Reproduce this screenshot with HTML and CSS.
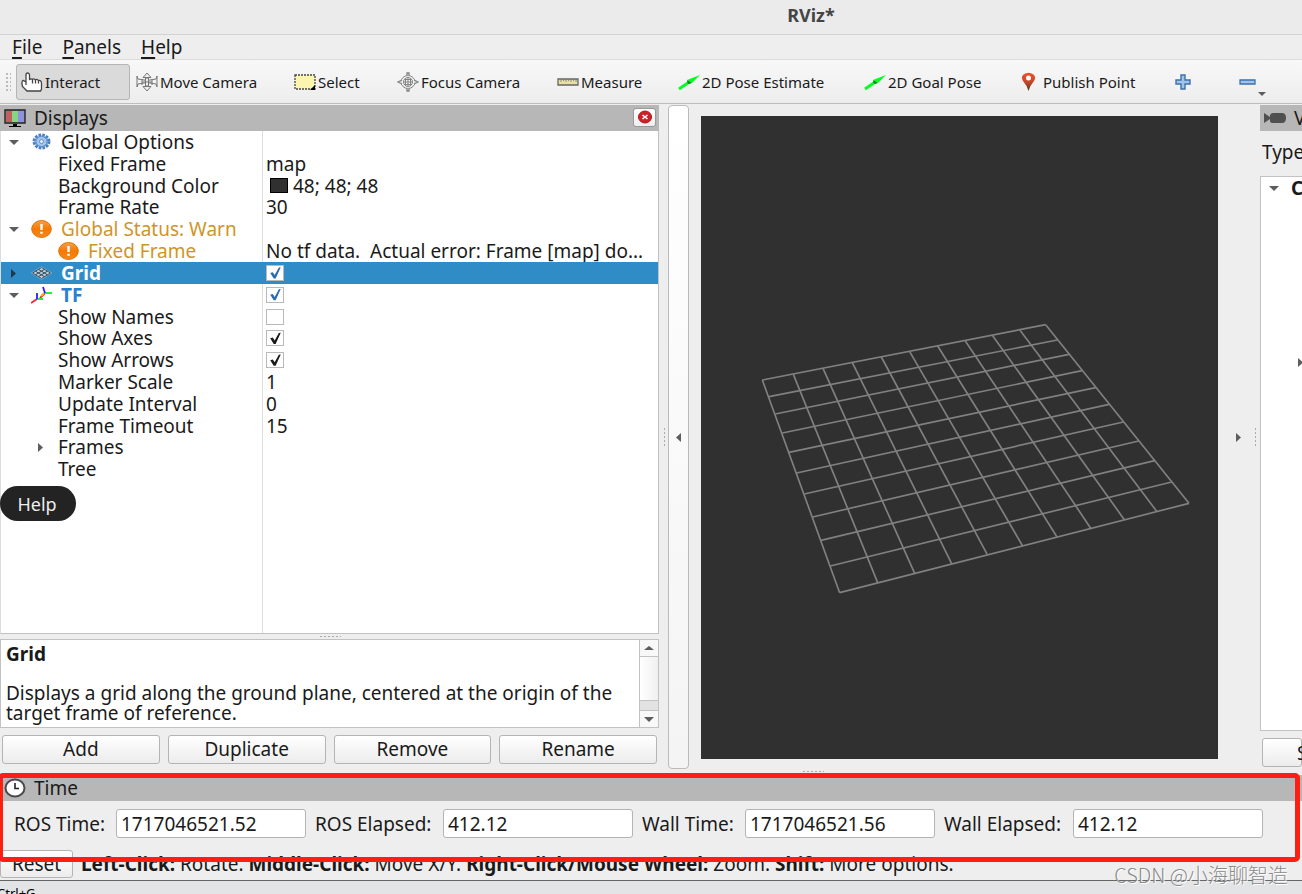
FILE: index.html
```html
<!DOCTYPE html>
<html lang="en">
<head>
<meta charset="utf-8">
<title>RViz*</title>
<link rel="stylesheet" href="styles.css">
</head>
<body>
<svg class="defs" aria-hidden="true">
  <defs>
    <linearGradient id="orange" x1="0" y1="0" x2="0" y2="1"><stop offset="0" stop-color="#f9a04a"/><stop offset=".5" stop-color="#f57900"/><stop offset="1" stop-color="#f58a1c"/></linearGradient>
    <linearGradient id="pin" x1="0" y1="0" x2="0" y2="1"><stop offset="0" stop-color="#f0502c"/><stop offset=".5" stop-color="#c8482a"/><stop offset="1" stop-color="#4e3a1c"/></linearGradient>
    <symbol id="down" viewBox="0 0 12 12"><path d="M1 4h10L6 9z" fill="#5d5d5d"/></symbol>
    <symbol id="right" viewBox="0 0 12 12"><path d="M3 2v9l5-4.500z" fill="currentColor"/></symbol>
    <symbol id="left" viewBox="0 0 12 12"><path d="M8 2v9L3 6.500z" fill="#5d5d5d"/></symbol>
    <symbol id="warn" viewBox="0 0 21 18"><ellipse cx="10.500" cy="9" rx="9.800" ry="8.500" fill="url(#orange)" stroke="#e0700c"/><path d="M10.500 4v6M10.500 11.800v2" stroke="#fff" stroke-width="2.400"/></symbol>
    <symbol id="arrow3d" viewBox="0 0 22 18"><path d="M1 16L12 8.500" stroke="#0f2" stroke-width="3"/><path d="M9 7L22 2l-8 8z" fill="#0f2"/><path d="M9 7l5 3-3 1-1.500-1z" fill="#0a8a1c"/></symbol>
  </defs>
</svg>
<header class="titlebar"><h1>RViz*</h1></header>
<nav class="menubar">
  <button><u>F</u>ile</button><button><u>P</u>anels</button><button><u>H</u>elp</button>
</nav>
<div class="toolbar">
  <span class="grip"></span>
  <button class="tool active"><svg width="22" height="20" viewBox="0 0 22 20"><path d="M5 10V3q0-2 1.700-2T8.500 3v5q1-2 3-.5 1-1.500 3 .5 1-1.500 3 .5 3-.5 3 3v5.500L19.500 19H6l-4.500-4.500Q0 8.500 2.500 8.500L5 10v3M11.500 8v3.500M14.500 8v3.500M17.500 9v2.500" fill="#fff" stroke="#444" stroke-width="1.300"/></svg>Interact</button>
  <button class="tool"><svg width="22" height="20" viewBox="0 0 22 20"><g fill="#eee" stroke="#777"><path d="M11 1l4 4.500H7zM11 19l4-4.500H7z"/><path d="M1 4l1 3q9 3 18 0l1-3v11l-1-3q-9-3-18 0l-1 3z" fill="none"/><path d="M6 7v6M16 7v6M9.500 6v8h3V6zM6 10h10" /></g></svg>Move Camera</button>
  <button class="tool"><svg width="22" height="18" viewBox="0 0 22 18"><path d="M1 2h20v14H1z" fill="#fcf5b0" stroke="#444" stroke-width="1.300" stroke-dasharray="2 1"/><path d="M21 12v5h-5z"/></svg>Select</button>
  <button class="tool"><svg width="22" height="20" viewBox="0 0 22 20"><g fill="none" stroke="#858585"><ellipse cx="11" cy="10" rx="7" ry="6.500"/><ellipse cx="11" cy="10" rx="4.500" ry="4.500"/><path d="M11 5v10M6 10h10M7 7.500h8M7 12.500h8M8.500 6v8M13.500 6v8"/><path d="M10 4V1h2v3M10 16v3h2v-3M5 8l-4 2 4 2M17 8l4 2-4 2" fill="#ddd" stroke-width="1.300"/></g></svg>Focus Camera</button>
  <button class="tool"><svg width="22" height="10" viewBox="0 0 22 10"><path d="M1 2h20v6H1z" fill="#e8dfa5" stroke="#666" stroke-width="1.300"/><path d="M4 2v3M6.500 2v2M9 2v3M11.500 2v2M14 2v3M16.500 2v2M19 2v3" stroke="#777" stroke-width=".8"/></svg>Measure</button>
  <button class="tool"><svg width="22" height="18"><use href="#arrow3d"/></svg>2D Pose Estimate</button>
  <button class="tool"><svg width="22" height="18"><use href="#arrow3d"/></svg>2D Goal Pose</button>
  <button class="tool"><svg width="22" height="20" viewBox="0 0 22 20"><path d="M9.500 19Q8.500 14 5 10.500 1 5.500 4.500 2.500 9.500-1 14.500 2.500 18 5.500 14 10.500 10.500 14 9.500 19z" fill="url(#pin)"/><circle cx="9.500" cy="6" r="2.500" fill="#fff"/></svg>Publish Point</button>
  <button class="tool" aria-label="Add tool"><svg width="22" height="18" viewBox="0 0 22 18"><path d="M9 2h4v5h5v4h-5v5H9v-5H4V7h5z" fill="#a3c3e6" stroke="#3e70b0" stroke-width="1.400"/></svg></button>
  <button class="tool" aria-label="Remove tool"><svg width="32" height="30" viewBox="0 0 32 30"><path d="M3 13h15v4H3z" fill="#a3c3e6" stroke="#3e70b0" stroke-width="1.300"/><path d="M21 25h8l-4 4z" fill="#5d5d5d"/></svg></button>
</div>

<main class="workspace">
  <section class="displays">
    <div class="dock-title">
      <svg width="22" height="20" viewBox="0 0 22 20"><path d="M1 2h20v13H1z" fill="#999" stroke="#222" stroke-width="1.400"/><path d="M2 3h6v11H2z" fill="#c25f5f"/><path d="M8 3h6v11H8z" fill="#84d684"/><path d="M14 3h6v11h-6z" fill="#9191e0"/><path d="M9 16h4v2h4v1H5v-1h4z"/></svg>
      <h2>Displays</h2>
      <button class="close" aria-label="Close"><svg width="16" height="14" viewBox="0 0 16 14"><ellipse cx="8" cy="7" rx="6.500" ry="6" fill="#cf2029" stroke="#a8141c"/><path d="M5.500 5l5 4m0-4l-5 4" stroke="#fff" stroke-width="1.600"/></svg></button>
    </div>
    <div class="tree">
      <div class="rows">
        <div class="row"><div class="name"><svg class="twist"><use href="#down"/></svg><svg width="21" height="18" viewBox="0 0 21 18"><ellipse cx="10.500" cy="8.500" rx="7.500" ry="6.500" fill="#a5c5ea" stroke="#4b7fc0" stroke-width="3" stroke-dasharray="2.500 1.200"/><ellipse cx="10.500" cy="8.500" rx="5.500" ry="5" fill="#a5c5ea" stroke="#5c8ecb"/><circle cx="10.500" cy="8.500" r="2" fill="#e8f0fa" stroke="#5c8ecb"/></svg>Global Options</div></div>
        <div class="row"><div class="name child">Fixed Frame</div><div class="value">map</div></div>
        <div class="row"><div class="name child">Background Color</div><div class="value"><span class="swatch"></span>48; 48; 48</div></div>
        <div class="row"><div class="name child">Frame Rate</div><div class="value">30</div></div>
        <div class="row warning"><div class="name"><svg class="twist"><use href="#down"/></svg><svg width="21" height="18"><use href="#warn"/></svg>Global Status: Warn</div></div>
        <div class="row warning"><div class="name child"><svg width="21" height="18"><use href="#warn"/></svg>Fixed Frame</div><div class="value">No tf data.&nbsp; Actual error: Frame [map] do…</div></div>
        <div class="row display selected"><div class="name"><svg class="twist"><use href="#right"/></svg><svg width="21" height="18" viewBox="0 0 21 18"><path d="M0 9l10.500-6.500L21 9l-10.500 6.500z" fill="#b9cfdd"/><path d="M1.500 9l9-5.500 9 5.500-9 5.500zM4.500 7.200l9 5.500M7.500 5.400l9 5.500M4.500 10.800l9-5.500M7.500 12.600l9-5.500" fill="none" stroke="#34495a"/></svg>Grid</div><div class="value"><input type="checkbox" aria-label="Grid" checked></div></div>
        <div class="row display"><div class="name"><svg class="twist"><use href="#down"/></svg><svg width="21" height="18" viewBox="0 0 21 18"><g fill="none" stroke-width="1.800"><path d="M0 17l6-4M9 12l5-5" stroke="#f22"/><path d="M10 10l3-3" stroke="#fb0"/><path d="M6 13h6M14 7h7" stroke="#2e4"/><path d="M6 13V7M14 7l-2-6" stroke="#22f"/></g></svg>TF</div><div class="value"><input type="checkbox" aria-label="TF" checked></div></div>
        <div class="row"><div class="name child"><label for="names">Show Names</label></div><div class="value"><input type="checkbox" id="names"></div></div>
        <div class="row"><div class="name child"><label for="axes">Show Axes</label></div><div class="value"><input type="checkbox" id="axes" checked></div></div>
        <div class="row"><div class="name child"><label for="arrows">Show Arrows</label></div><div class="value"><input type="checkbox" id="arrows" checked></div></div>
        <div class="row"><div class="name child">Marker Scale</div><div class="value">1</div></div>
        <div class="row"><div class="name child">Update Interval</div><div class="value">0</div></div>
        <div class="row"><div class="name child">Frame Timeout</div><div class="value">15</div></div>
        <div class="row"><div class="name nested"><svg class="twist"><use href="#right"/></svg>Frames</div></div>
        <div class="row"><div class="name child">Tree</div></div>
      </div>
      <button class="help">Help</button>
    </div>
    <span class="dots"></span>
    <div class="description">
      <div class="about"><h3>Grid</h3><p>Displays a grid along the ground plane, centered at the origin of the target frame of reference.</p></div>
      <div class="scroll"><button aria-label="Scroll up"><svg width="12" height="12" viewBox="0 0 12 12"><path d="M1 8h10L6 4z" fill="#5d5d5d"/></svg></button><span class="thumb"></span><span class="track"></span><button aria-label="Scroll down"><svg width="12" height="12"><use href="#down"/></svg></button></div>
    </div>
    <div class="actions"><button>Add</button><button>Duplicate</button><button>Remove</button><button>Rename</button></div>
  </section>

  <div class="gutter"><span class="dots upright"></span><button class="collapse" aria-label="Hide left dock"><svg class="twist"><use href="#left"/></svg></button></div>

  <section class="viewport" aria-label="3D view">
    <svg width="517" height="643" viewBox="0 0 517 643">
      <g transform="translate(49 194) scale(.33333)" fill="none" stroke="#808080" stroke-width="5">
        <path d="M37 210L887 44M57 260L922 90M76 312L957 133M97 369L996 182M117 427L1037 233M140 489L1077 283M163 552L1120 336M188 621L1166 393M213 691L1214 452M241 768L1265 516M269 848L1317 580"/>
        <path d="M37 210L269 848M130 193L383 818M219 175L494 790M307 158L605 761M394 141L712 734M479 125L818 708M563 108L921 681M646 93L1023 656M728 77L1123 629M810 61L1221 605M887 44L1317 580"/>
      </g>
    </svg>
    <span class="dots"></span>
  </section>

  <div class="gutter end"><button class="expand" aria-label="Hide right dock"><svg class="twist"><use href="#right"/></svg></button><span class="dots upright"></span></div>

  <section class="views">
    <div class="dock-title"><svg width="22" height="14" viewBox="0 0 22 14"><path d="M0 2l6 4V4q1-2 3-2h9q4 0 4 5t-4 5H9q-3 0-3-2V8l-6 4z" fill="#505050"/></svg><h2>Views</h2></div>
    <div class="type">Type:</div>
    <div class="view-tree"><div class="current"><svg class="twist"><use href="#down"/></svg>Current View</div><svg class="twist"><use href="#right"/></svg></div>
    <button class="save">Save</button>
  </section>
</main>

<section class="bottom">
  <div class="dock-title">
    <svg width="22" height="20" viewBox="0 0 22 20"><ellipse cx="11" cy="10" rx="9.500" ry="8.500" fill="#fff" stroke="#4a4a4a" stroke-width="2"/><path d="M11 5v5.500h4" fill="none" stroke="#222" stroke-width="1.600"/></svg>
    <h2>Time</h2>
  </div>
  <form class="times">
    <label for="t1">ROS Time:</label><input id="t1" value="1717046521.52">
    <label for="t2">ROS Elapsed:</label><input id="t2" value="412.12">
    <label for="t3">Wall Time:</label><input id="t3" value="1717046521.56">
    <label for="t4">Wall Elapsed:</label><input id="t4" value="412.12">
  </form>
  <div class="status"><button>Reset</button><p><b>Left-Click:</b> Rotate. <b>Middle-Click:</b> Move X/Y. <b>Right-Click/Mouse Wheel:</b> Zoom. <b>Shift:</b> More options.</p></div>
  <div class="frame"></div>
</section>
<footer class="strip"><span>Ctrl+G</span><div class="watermark">CSDN @小海聊智造</div></footer>
</body>
</html>
```
FILE: styles.css
```css
* { box-sizing: border-box; }
body {
  margin: 0;
  height: 100vh;
  display: flex;
  flex-direction: column;
  overflow: hidden;
  background: #eee;
  color: #1a1a1a;
  font: 19px/22px "Noto Sans", "Open Sans", sans-serif;
}
h1, h2, h3, p { margin: 0; }
button, input { font: inherit; color: inherit; margin: 0; padding: 0; }
button { border: 0; background: none; }
svg { display: block; flex: none; }
.defs { position: absolute; width: 0; height: 0; }
.twist { width: 12px; height: 12px; color: #5d5d5d; }

.titlebar {
  flex: none;
  height: 35px;
  padding: 3px 0 0 320px;
  background: #ebebeb;
  border-bottom: 1px solid #d2d2d2;
}
.titlebar h1 { font-size: 18px; line-height: 24px; text-align: center; color: #454545; }
.menubar { flex: none; height: 25px; padding-left: 12px; display: flex; gap: 20px; align-items: center; border-bottom: 1px solid #dcdcdc; }
.menubar u { text-decoration-thickness: 2px; text-underline-offset: 3px; }

.toolbar {
  flex: none;
  height: 44px;
  padding: 4px 0 3px 5px;
  display: grid;
  grid-template-columns: 11px 115px 158px 103px 160px 121px 186px 155px 153px 65px 1fr;
  font-size: 15px;
  background: linear-gradient(#f8f8f8, #ededed);
  border-bottom: 1px solid #bdbdbd;
}
.tool { display: flex; align-items: center; gap: 2px; white-space: nowrap; border: 1px solid transparent; padding: 0 4px; border-radius: 3px; }
.tool.active { margin-right: 1px; background: #dadada; border-color: #b5b5b5; }
.grip {
  width: 6px;
  height: 20px;
  align-self: center;
  background: radial-gradient(circle, #bbb 1px, transparent 1px) 0 0 / 4px 4px;
}

.workspace {
  flex: 1;
  min-height: 0;
  padding-top: 1px;
  display: grid;
  grid-template-columns: minmax(0, 659fr) 42px minmax(0, 517fr) 42px minmax(0, 42fr);
}
.displays { display: flex; flex-direction: column; }
.dock-title { flex: none; height: 26px; display: flex; align-items: center; gap: 8px; padding: 0 3px 0 4px; background: #b7b7b7; }
.dock-title h2 { font-size: inherit; font-weight: 400; }
.close { margin-left: auto; margin-bottom: 2px; width: 23px; height: 19px; display: grid; place-items: center; border: 1px solid #999; border-radius: 3px; background: linear-gradient(#fff, #eee); }

.tree {
  position: relative;
  flex: 1;
  border: 1px solid #c2c2c2;
  border-left-color: #ddd;
  border-top: 0;
  background: linear-gradient(#dcdcdc, #dcdcdc) 261px 0 / 1px 100% no-repeat #fff;
}
.rows { height: 349px; display: grid; grid-template-rows: repeat(16, 1fr); }
.row { display: grid; grid-template-columns: 262px minmax(0, 1fr); align-items: center; min-height: 0; }
.name { display: flex; align-items: center; gap: 9px; padding-left: 7px; white-space: nowrap; }
.name .twist { margin-right: 2px; }
.name.child { padding-left: 57px; }
.name.nested { padding-left: 34px; }
.value { display: flex; align-items: center; gap: 5px; padding: 0 3px; white-space: nowrap; }
.swatch { width: 18px; height: 15px; margin-left: 4px; background: #303030; border: 1px solid #000; }
.warning .name { color: #cf9526; }
.display .name { font-weight: 700; color: #2a80d0; }
.row.selected { background: #308cc6; }
.selected .name { color: #fff; }
.selected .twist { color: #1d3a4c; }
.value input {
  appearance: none;
  width: 18px;
  height: 16px;
  border: 1px solid #b9b9b9;
  background: #fff;
}
.value input:checked::before {
  content: "";
  display: block;
  height: 100%;
  background: #1a1a1a;
  clip-path: polygon(20% 50%, 36% 45%, 48% 66%, 74% 12%, 86% 10%, 54% 90%, 42% 90%);
}
.display input:checked::before { background: #2a6cb0; }
.help { position: absolute; left: -1px; top: 355px; width: 76px; height: 35px; padding-right: 2px; border-radius: 18px; background: #232323; color: #eee; font-size: 18px; }

.dots { flex: none; align-self: center; width: 22px; height: 5px; background: radial-gradient(circle, #aaa 1px, transparent 1px) 0 0 / 4px 5px; }
.upright { width: 3px; height: 20px; background-size: 3px 4px; }

.description { flex: none; height: 89px; display: flex; border: 1px solid #c2c2c2; background: #fff; }
.about { flex: 1; padding: 4px 0 0 5px; line-height: 20px; }
.about h3 { font-size: inherit; margin-bottom: 19px; }
.scroll { width: 19px; display: flex; flex-direction: column; border-left: 1px solid #c2c2c2; }
.scroll button { height: 16px; display: grid; place-items: center; background: #f8f8f8; }
.thumb { flex: 1; border: solid #c2c2c2; border-width: 1px 0; background: linear-gradient(90deg, #fff, #f0f0f0); }
.track { height: 10px; background: #e2e2e2; border-bottom: 1px solid #c2c2c2; }

.actions { flex: none; display: grid; grid-template-columns: repeat(4, 1fr); gap: 8px; padding: 7px 2px 10px; }
.actions button, .save, .status button {
  height: 29px;
  border: 1px solid #b4b4b4;
  border-radius: 3px;
  background: linear-gradient(#fff, #ececec);
}
.actions button { line-height: 20px; padding-bottom: 1px; }

.gutter { display: flex; align-items: center; justify-content: space-between; padding: 0 12px 5px 4px; }
.gutter.end { justify-content: flex-end; gap: 9px; padding: 0 3px 5px 0; }
.collapse { align-self: stretch; width: 21px; display: grid; place-items: center; border: 1px solid #bbb; border-radius: 4px; background: linear-gradient(#fff, #f4f4f4); }
.viewport { display: flex; flex-direction: column; padding-top: 11px; }
.viewport > svg { width: 100%; height: auto; flex: 1; min-height: 0; background: #303030; }
.viewport .dots { margin-top: 10px; margin-right: 293px; }

.views { display: flex; flex-direction: column; overflow: hidden; white-space: nowrap; padding-bottom: 7px; }
.type { padding: 10px 0 13px 2px; }
.view-tree { flex: 1; border: 1px solid #c2c2c2; border-right: 0; background: #fff; }
.current { display: flex; align-items: center; gap: 11px; padding-left: 7px; font-weight: 700; }
.view-tree > .twist { margin: 157px 0 0 34px; }
.save { margin: 7px 0 0 2px; padding-left: 34px; text-align: left; }

.bottom { flex: none; position: relative; padding-top: 3px; }
.times {
  display: grid;
  grid-template-columns: 93px 1fr 119px 1fr 94px 1fr 120px 1fr;
  gap: 9px;
  align-items: center;
  padding: 8px 39px 0 14px;
  white-space: nowrap;
}
.times input { width: 100%; min-width: 0; height: 29px; padding: 0 4px; border: 1px solid #b4b4b4; border-radius: 3px; background: #fff; }
.status { display: flex; align-items: center; gap: 8px; padding: 12px 0 2px; white-space: nowrap; }
.status button { width: 73px; height: 28px; }
.frame { position: absolute; inset: 1px 2px 18px -2px; border: 5px solid #ff1f10; border-radius: 5px; pointer-events: none; }

.strip { position: relative; flex: none; height: 14px; border-top: 1px solid #666; background: #e3e4e6; }
.strip span { display: block; height: 13px; margin-left: -3px; padding-top: 4px; overflow: hidden; color: #000; font: 13px/16px "Noto Sans", sans-serif; }
.watermark { position: absolute; right: 14px; bottom: 5px; font: 300 20px/28px "Noto Sans CJK SC", sans-serif; color: #8a8a8a; text-shadow: 1px 1px 0 #fff; }
```
